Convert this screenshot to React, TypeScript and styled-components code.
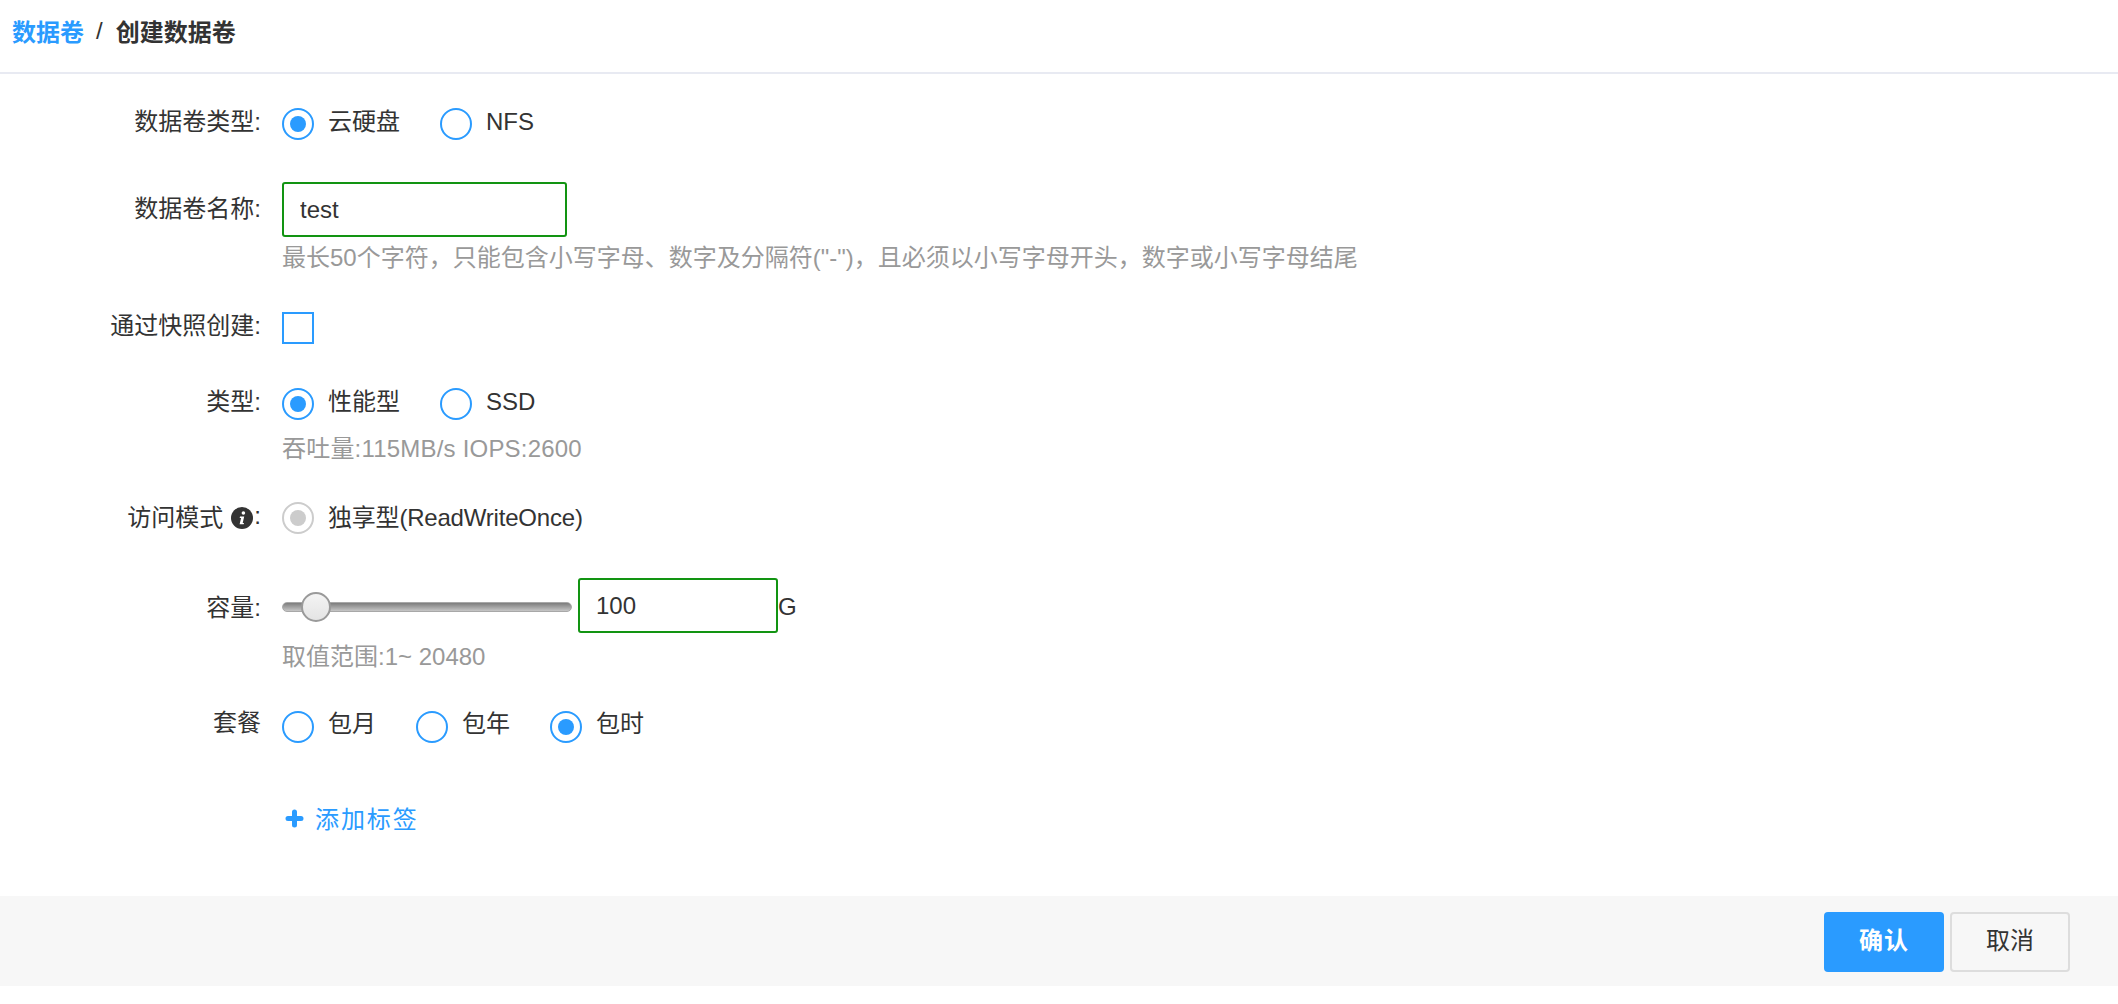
import { createGlobalStyle, styled } from "styled-components";

const GlobalStyle = createGlobalStyle`
  html, body {
    margin: 0;
    padding: 0;
    background: #ffffff;
  }

  body {
    font-family: "Liberation Sans", "Noto Sans CJK SC", sans-serif;
    font-size: 24px;
    color: #333333;
  }
`;

const Page = styled.div`
  width: 100%;
  height: 1004px;
  overflow: hidden;
`;

const Header = styled.header`
  display: flex;
  align-items: center;
  height: 74px;
  padding: 0 0 11px 12px;
  border-bottom: 2px solid #e8eaf2;
  box-sizing: border-box;
  font-size: 24px;
  font-weight: 700;
`;

const CrumbLink = styled.a`
  color: #2a9bff;
`;

const CrumbSep = styled.span`
  margin: 0 13px 0 12px;
  font-weight: 400;
`;

const Form = styled.form`
  display: flex;
  flex-direction: column;
  height: 822px;
  padding-top: 34px;
  box-sizing: border-box;
`;

const Row = styled.div<{ $top?: number }>`
  display: grid;
  grid-template-columns: 261px 1fr;
  column-gap: 21px;
  margin-top: ${(p) => p.$top ?? 0}px;
`;

const Label = styled.div<{ $h?: number; $shift?: number }>`
  display: flex;
  align-items: center;
  justify-content: flex-end;
  height: ${(p) => p.$h ?? 32}px;
  padding-bottom: ${(p) => p.$shift ?? 10}px;
  box-sizing: border-box;
  white-space: nowrap;
`;

const Control = styled.div`
  display: flex;
  align-items: center;
`;

const RadioGroup = styled.div`
  display: flex;
  align-items: center;
  height: 32px;
`;

const RadioOption = styled.label<{ $w: number }>`
  display: flex;
  align-items: center;
  width: ${(p) => p.$w}px;
  height: 32px;
`;

const RadioText = styled.span<{ $shift?: number; $spacing?: number }>`
  margin-bottom: ${(p) => p.$shift ?? 10}px;
  letter-spacing: ${(p) => p.$spacing ?? 0}px;
  white-space: nowrap;
`;

const RadioInput = styled.input.attrs({ type: "radio" })`
  appearance: none;
  display: flex;
  align-items: center;
  justify-content: center;
  flex: none;
  width: 32px;
  height: 32px;
  margin: 0 14px 0 0;
  border: 2px solid #2a9bff;
  border-radius: 50%;
  box-sizing: border-box;
  background: #ffffff;

  &:checked::before {
    content: "";
    width: 16px;
    height: 16px;
    border-radius: 50%;
    background: #2a9bff;
  }

  &:disabled {
    border-color: #cccccc;
  }

  &:disabled::before {
    background: #cccccc;
  }
`;

const CheckInput = styled.input.attrs({ type: "checkbox" })`
  appearance: none;
  display: block;
  width: 32px;
  height: 32px;
  margin: 0;
  border: 2px solid #2a9bff;
  box-sizing: border-box;
  background: #ffffff;
`;

const TextField = styled.input<{ $w: number }>`
  width: ${(p) => p.$w}px;
  height: 55px;
  padding: 0 16px;
  border: 2px solid #129412;
  border-radius: 3px;
  box-sizing: border-box;
  outline: none;
  font: inherit;
  color: #333333;
`;

const Hint = styled.div<{ $top: number; $spacing?: number }>`
  grid-column: 2;
  margin-top: ${(p) => p.$top}px;
  line-height: 24px;
  letter-spacing: ${(p) => p.$spacing ?? 0}px;
  color: #999999;
  white-space: nowrap;
`;

const Slider = styled.input.attrs({ type: "range" })`
  appearance: none;
  display: block;
  width: 290px;
  height: 30px;
  margin: 2px 6px 0 0;
  background: transparent;

  &::-webkit-slider-runnable-track {
    height: 10px;
    border-radius: 5px;
    border: 1px solid #a8a8a8;
    box-sizing: border-box;
    background: linear-gradient(#7d7d7d, #c6c6c6);
  }

  &::-webkit-slider-thumb {
    appearance: none;
    width: 30px;
    height: 30px;
    margin-top: -11px;
    border: 2px solid #9a9a9a;
    border-radius: 50%;
    box-sizing: border-box;
    background: linear-gradient(#f4f4f4, #e4e4e4);
  }
`;

const Unit = styled.span`
  margin-top: 2px;
`;

const InfoIcon = styled.svg`
  width: 22px;
  height: 22px;
  margin: 4px 1px 0 8px;
`;

const AddTag = styled.a`
  display: flex;
  align-items: center;
  height: 24px;
  padding-left: 3px;
  letter-spacing: 1.9px;
  color: #2a9bff;
`;

const PlusIcon = styled.svg`
  width: 19px;
  height: 19px;
  margin: 3px 11px 0 0;
`;

const Footer = styled.footer`
  display: flex;
  justify-content: flex-end;
  gap: 6px;
  height: 90px;
  padding: 16px 48px 0 0;
  box-sizing: border-box;
  background: #f7f7f7;
`;

const Button = styled.button<{ $primary?: boolean }>`
  width: 120px;
  height: 60px;
  padding: 0 0 7px;
  border: ${(p) => (p.$primary ? "none" : "2px solid #dddddd")};
  border-radius: 4px;
  background: ${(p) => (p.$primary ? "#2a9bff" : "#f7f7f7")};
  color: ${(p) => (p.$primary ? "#ffffff" : "#333333")};
  font: inherit;
  font-weight: ${(p) => (p.$primary ? 700 : 400)};
  letter-spacing: ${(p) => (p.$primary ? 1 : 0)}px;
`;

export default function App() {
  return (
    <Page>
      <GlobalStyle />
      <Header>
        <CrumbLink>数据卷</CrumbLink>
        <CrumbSep>/</CrumbSep>
        <span>创建数据卷</span>
      </Header>
      <Form>
        <Row>
          <Label>数据卷类型:</Label>
          <RadioGroup>
            <RadioOption $w={158}>
              <RadioInput name="kind" defaultChecked />
              <RadioText>云硬盘</RadioText>
            </RadioOption>
            <RadioOption $w={100}>
              <RadioInput name="kind" />
              <RadioText $shift={4}>NFS</RadioText>
            </RadioOption>
          </RadioGroup>
        </Row>
        <Row $top={42}>
          <Label $h={55} $shift={6}>
            数据卷名称:
          </Label>
          <TextField $w={285} defaultValue="test" />
          <Hint $top={9}>
            最长50个字符，只能包含小写字母、数字及分隔符("-")，且必须以小写字母开头，数字或小写字母结尾
          </Hint>
        </Row>
        <Row $top={42}>
          <Label>通过快照创建:</Label>
          <CheckInput />
        </Row>
        <Row $top={44}>
          <Label>类型:</Label>
          <RadioGroup>
            <RadioOption $w={158}>
              <RadioInput name="disk" defaultChecked />
              <RadioText>性能型</RadioText>
            </RadioOption>
            <RadioOption $w={100}>
              <RadioInput name="disk" />
              <RadioText $shift={4}>SSD</RadioText>
            </RadioOption>
          </RadioGroup>
          <Hint $top={17} $spacing={0.2}>
            吞吐量:115MB/s IOPS:2600
          </Hint>
        </Row>
        <Row $top={41}>
          <Label $shift={5}>
            访问模式
            <InfoIcon viewBox="0 0 22 22">
              <circle cx="11" cy="11" r="11" fill="#333333" />
              <circle cx="12.4" cy="6" r="1.8" fill="#ffffff" />
              <path
                d="M9 9.6h4.2l-1.5 6.4h1.3l-.3 1.3H8.6l1.5-6.4H8.7z"
                fill="#ffffff"
              />
            </InfoIcon>
            :
          </Label>
          <RadioGroup>
            <RadioOption $w={320}>
              <RadioInput name="mode" defaultChecked disabled />
              <RadioText $shift={6} $spacing={-0.2}>
                独享型(ReadWriteOnce)
              </RadioText>
            </RadioOption>
          </RadioGroup>
        </Row>
        <Row $top={44}>
          <Label $h={55} $shift={0}>
            容量:
          </Label>
          <Control>
            <Slider min={0} max={260} defaultValue={18} />
            <TextField $w={200} defaultValue="100" />
            <Unit>G</Unit>
          </Control>
          <Hint $top={12}>取值范围:1~ 20480</Hint>
        </Row>
        <Row $top={42}>
          <Label $shift={14}>套餐</Label>
          <RadioGroup>
            <RadioOption $w={134}>
              <RadioInput name="plan" />
              <RadioText $shift={12}>包月</RadioText>
            </RadioOption>
            <RadioOption $w={134}>
              <RadioInput name="plan" />
              <RadioText $shift={12}>包年</RadioText>
            </RadioOption>
            <RadioOption $w={134}>
              <RadioInput name="plan" defaultChecked />
              <RadioText $shift={12}>包时</RadioText>
            </RadioOption>
          </RadioGroup>
        </Row>
        <Row $top={62}>
          <span />
          <AddTag>
            <PlusIcon viewBox="0 0 19 19">
              <path
                d="M9.5 3v13M3 9.5h13"
                stroke="#2a9bff"
                strokeWidth="5"
                strokeLinecap="round"
                fill="none"
              />
            </PlusIcon>
            添加标签
          </AddTag>
        </Row>
      </Form>
      <Footer>
        <Button $primary>确认</Button>
        <Button>取消</Button>
      </Footer>
    </Page>
  );
}
